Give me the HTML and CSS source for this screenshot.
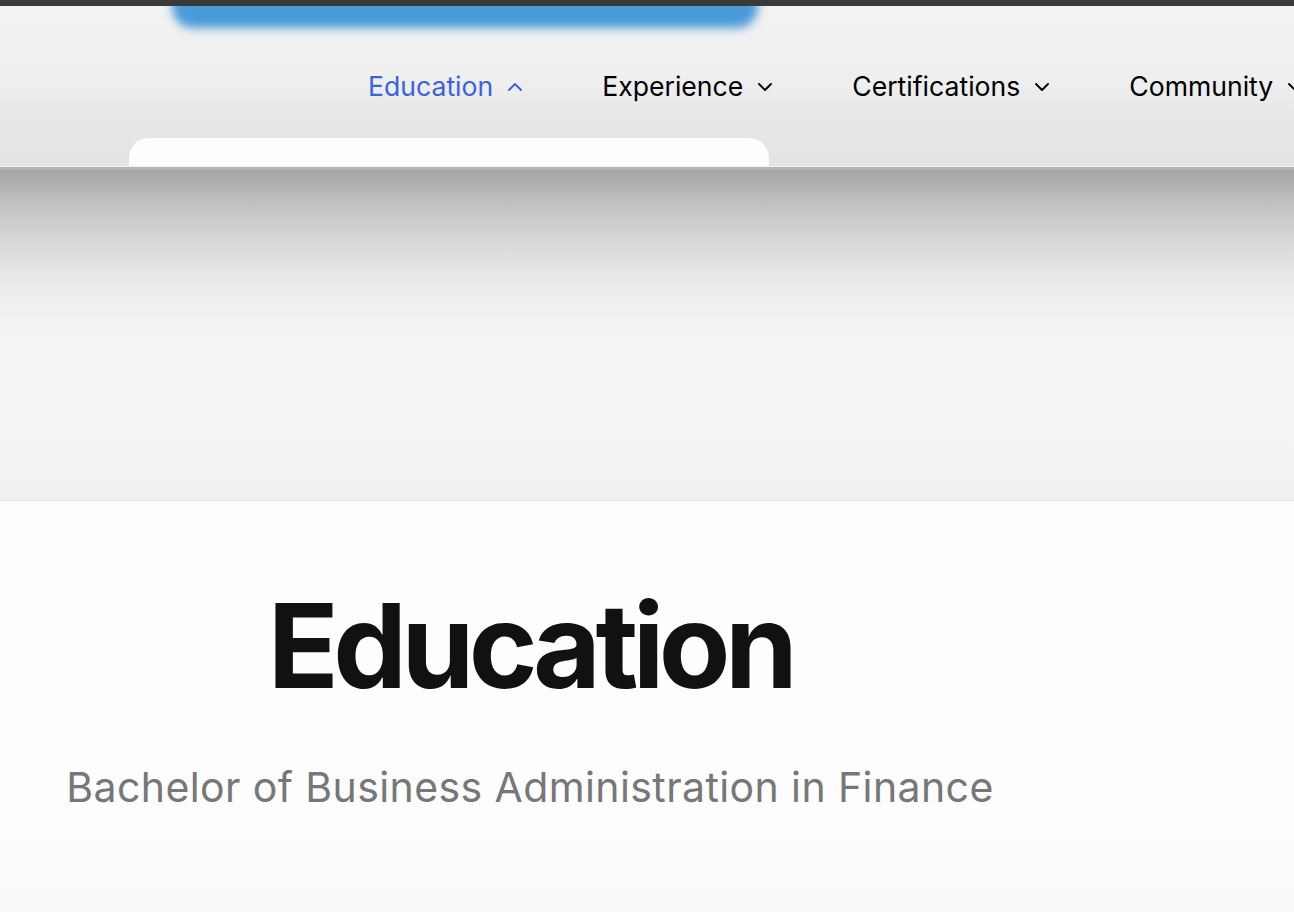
FILE: index.html
```html
<!DOCTYPE html>
<html lang="en">
<head>
<meta charset="utf-8">
<title>Education</title>
<link rel="stylesheet" href="styles.css">
</head>
<body>
<div class="topbar"></div>
<header class="header">
  <div class="glow"></div>
  <nav class="nav">
    <a class="nav-item active" href="#">Education
      <svg class="chev" viewBox="0 0 16 10" width="16" height="10"><path d="M2 8 L8 2 L14 8" fill="none" stroke="currentColor" stroke-width="1.9" stroke-linecap="round" stroke-linejoin="round"/></svg>
    </a>
    <a class="nav-item" href="#">Experience
      <svg class="chev" viewBox="0 0 16 10" width="16" height="10"><path d="M2 2 L8 8 L14 2" fill="none" stroke="currentColor" stroke-width="1.9" stroke-linecap="round" stroke-linejoin="round"/></svg>
    </a>
    <a class="nav-item" href="#">Certifications
      <svg class="chev" viewBox="0 0 16 10" width="16" height="10"><path d="M2 2 L8 8 L14 2" fill="none" stroke="currentColor" stroke-width="1.9" stroke-linecap="round" stroke-linejoin="round"/></svg>
    </a>
    <a class="nav-item" href="#">Community
      <svg class="chev" viewBox="0 0 16 10" width="16" height="10"><path d="M2 2 L8 8 L14 2" fill="none" stroke="currentColor" stroke-width="1.9" stroke-linecap="round" stroke-linejoin="round"/></svg>
    </a>
  </nav>
  <div class="dropdown"></div>
</header>
<div class="divider"></div>
<div class="shade"></div>
<main class="content">
  <div class="content-inner">
    <h1 class="title">Education</h1>
    <p class="subtitle">Bachelor of Business Administration in Finance</p>
  </div>
</main>
</body>
</html>
```
FILE: styles.css
```css
* { box-sizing: border-box; }
html, body { margin: 0; padding: 0; }
body {
  width: 1294px;
  height: 918px;
  overflow: hidden;
  background: #ffffff;
  font-family: "Inter", "Liberation Sans", sans-serif;
}
.topbar { height: 6px; background: #3a3a3a; }
.header {
  position: relative;
  height: 160px;
  overflow: hidden;
  background: linear-gradient(180deg, #f2f2f2 0%, #efeff0 45%, #e6e6e7 75%, #e3e3e4 100%);
}
.glow {
  position: absolute;
  left: 172px;
  top: -20px;
  width: 586px;
  height: 42px;
  border-radius: 22px;
  background: #4a9ad8;
  filter: blur(5px);
}
.nav {
  display: flex;
  align-items: center;
  padding: 64px 0 0 368px;
  white-space: nowrap;
}
.nav-item {
  display: flex;
  align-items: center;
  gap: 14px;
  margin-right: 79px;
  font-size: 26.6px;
  line-height: 32px;
  color: #000000;
  text-decoration: none;
  flex-shrink: 0;
}
.nav-item.active { color: #3b63e0; }
.chev { flex-shrink: 0; margin-top: 2px; }
.dropdown {
  position: absolute;
  left: 129px;
  top: 132px;
  width: 640px;
  height: 40px;
  border-radius: 20px 20px 0 0;
  background: #fdfdfd;
}
.divider {
  height: 4px;
  border-top: 1px solid #f5f5f5;
  background: #b3b3b3;
}
.shade {
  height: 331px;
  border-bottom: 1px solid #e3e3e7;
  background: linear-gradient(180deg, #a4a4a4 0%, #c6c6c7 12%, #e2e2e3 28%, #eeeef0 38%, #f4f4f6 50%, #f3f3f5 85%, #f0f0f2 100%);
}
.content {
  height: 411px;
  background: linear-gradient(180deg, #fdfdfd 0%, #fdfdfd 80%, #f9f9f9 100%);
}
.content-inner {
  width: 1060px;
  padding-top: 86px;
  text-align: center;
}
.title {
  margin: 0;
  font-size: 117px;
  line-height: 1;
  font-weight: 700;
  letter-spacing: -5.6px;
  color: #111111;
}
.subtitle {
  margin: 63px 0 0;
  font-size: 41px;
  line-height: 1;
  font-weight: 400;
  letter-spacing: 0.4px;
  color: #777777;
}
```
